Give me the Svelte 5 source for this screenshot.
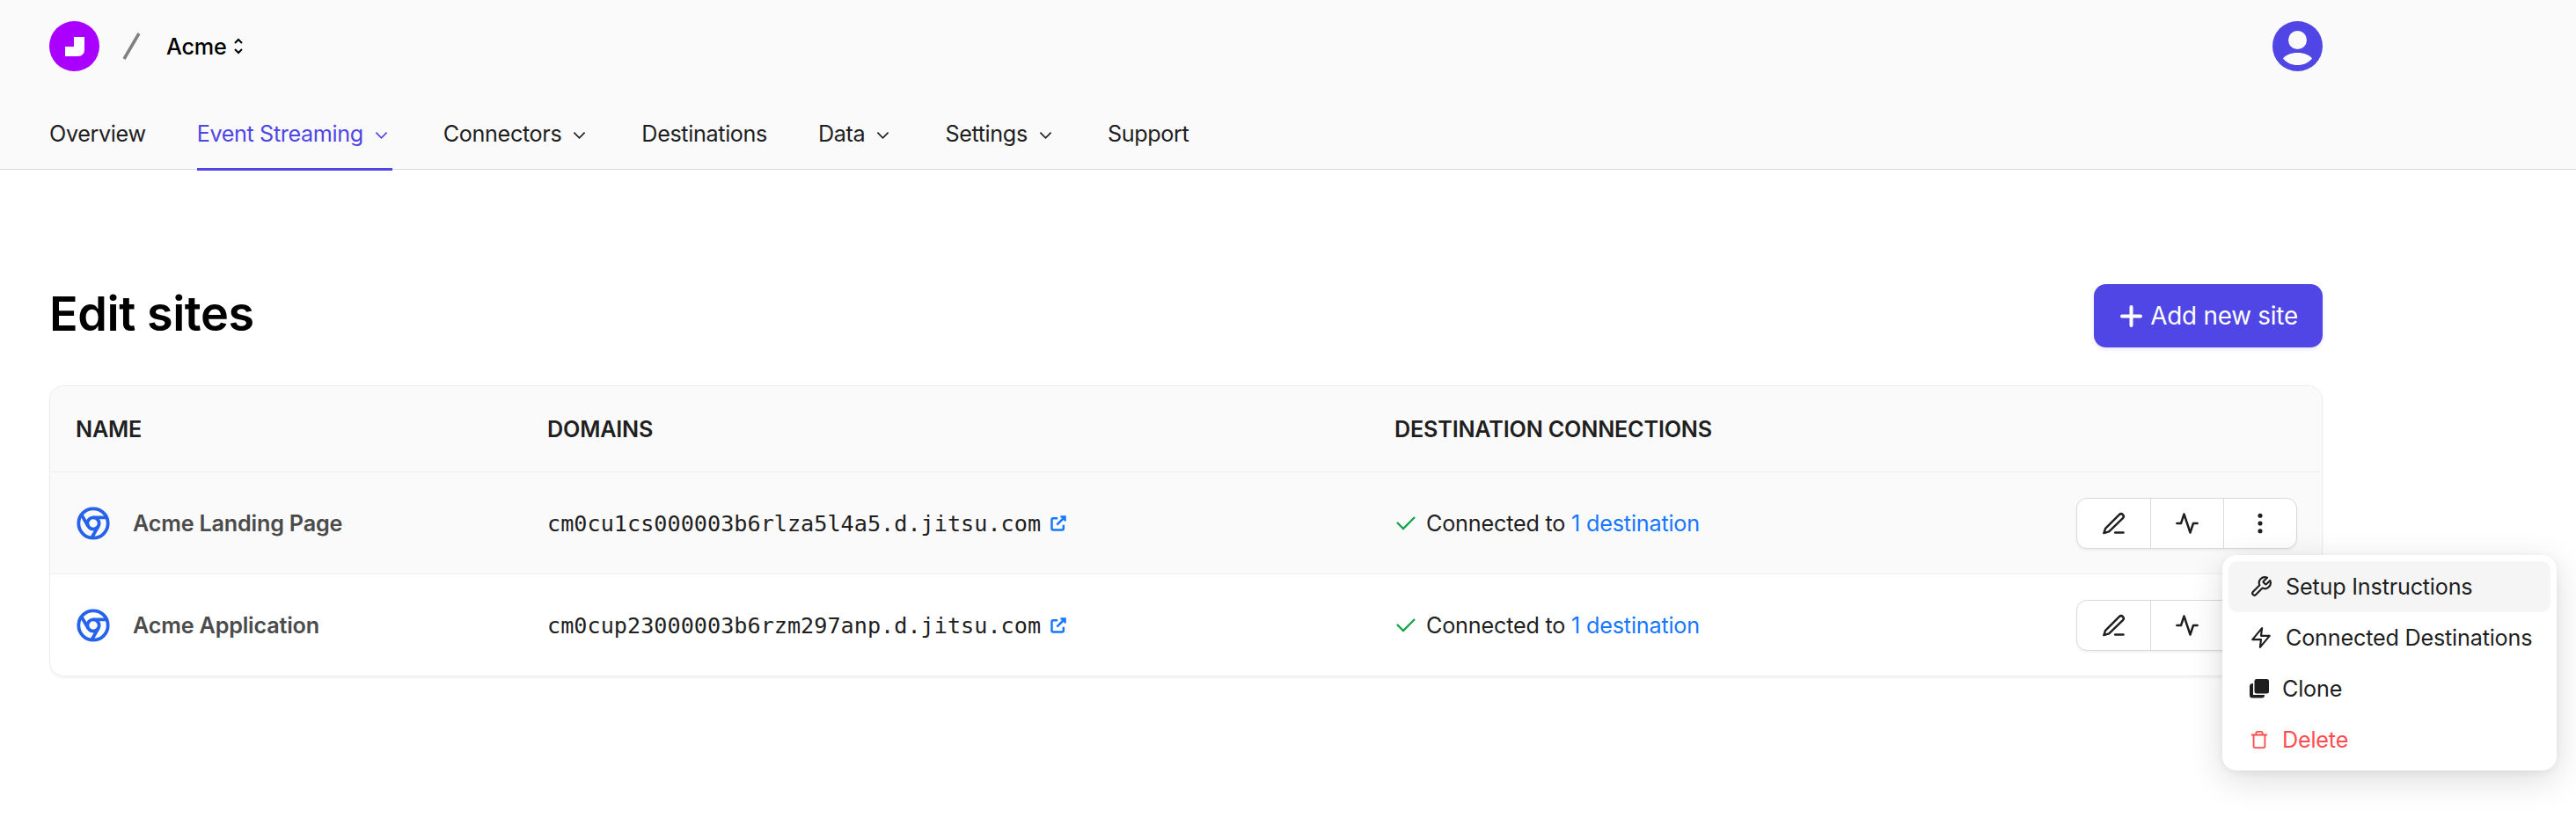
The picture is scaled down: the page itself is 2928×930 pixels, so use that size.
<script lang="ts">
	const tabs = [
		{ label: 'Overview' },
		{ label: 'Event Streaming', caret: true, active: true },
		{ label: 'Connectors', caret: true },
		{ label: 'Destinations' },
		{ label: 'Data', caret: true },
		{ label: 'Settings', caret: true },
		{ label: 'Support' }
	];

	const sites = [
		{ name: 'Acme Landing Page', domain: 'cm0cu1cs000003b6rlza5l4a5.d.jitsu.com' },
		{ name: 'Acme Application', domain: 'cm0cup23000003b6rzm297anp.d.jitsu.com' }
	];
</script>

<div class="page">
	<header class="top">
		<div class="brand">
			<svg class="logo" viewBox="0 0 57 57">
				<circle cx="28.500" cy="28.500" r="28.500" fill="#aa00ff" />
				<path d="M28 18h12v15a7 7 0 0 1-7 7H18V29h10z" fill="#fff" />
			</svg>
			<svg class="slash" viewBox="0 0 21 31">
				<line x1="2" y1="30" x2="19" y2="1" stroke="#808080" stroke-width="3.500" />
			</svg>
			<span class="workspace">Acme</span>
			<svg class="updown" viewBox="0 0 12 19" fill="none" stroke="#000" stroke-width="2">
				<path d="M2 6l4-4 4 4M2 13l4 4 4-4" />
			</svg>
			<svg class="avatar" viewBox="0 0 57 57">
				<circle cx="28.500" cy="28.500" r="28.500" fill="#4f46e5" />
				<circle cx="28.500" cy="21.500" r="10.500" fill="#fafafa" />
				<path d="M12 42.500c3-4 9-6.500 16.500-6.500s13.500 2.500 16.500 6.500c-4 5-10 7.500-16.500 7.500s-12.500-2.500-16.500-7.500z" fill="#fafafa" />
			</svg>
		</div>
		<nav class="tabs">
			{#each tabs as tab}
				<div class="tab" class:active={tab.active}>
					<span>{tab.label}</span>
					{#if tab.caret}
						<svg class="caret" viewBox="0 0 16 10" fill="none" stroke="currentColor" stroke-width="1.800">
							<path d="M1.500 1.500 8 8l6.500-6.500" />
						</svg>
					{/if}
				</div>
			{/each}
		</nav>
	</header>

	<main class="content">
		<div class="title-row">
			<h1>Edit sites</h1>
			<button class="add">
				<svg viewBox="0 0 25 25" fill="none" stroke="#fff" stroke-width="4" stroke-linecap="round">
					<path d="M12.500 2v21M2 12.500h21" />
				</svg>
				Add new site
			</button>
		</div>

		<div class="table-wrap">
			<table>
				<colgroup>
					<col style="width: 536px" />
					<col style="width: 963px" />
					<col />
					<col style="width: 280px" />
				</colgroup>
				<thead>
					<tr>
						<th>Name</th>
						<th>Domains</th>
						<th>Destination Connections</th>
						<th></th>
					</tr>
				</thead>
				<tbody>
					{#each sites as site}
						<tr>
							<td>
								<div class="site">
									<svg class="chrome" viewBox="0 0 24 24" fill="none" stroke="#2563eb" stroke-width="2.300">
										<circle cx="12" cy="12" r="10" />
										<circle cx="12" cy="12" r="4" />
										<path d="M21.170 8H12M3.950 6.060 8.540 14M10.880 21.940 15.460 14" />
									</svg>
									<span>{site.name}</span>
								</div>
							</td>
							<td>
								<div class="domain">
									<span>{site.domain}</span>
									<svg viewBox="0 0 24 24" fill="none" stroke="#1677ff" stroke-width="3">
										<path d="M19 14v5a2 2 0 0 1-2 2H5a2 2 0 0 1-2-2V7a2 2 0 0 1 2-2h6M15 3h6v6M10 14 21 3" />
									</svg>
								</div>
							</td>
							<td>
								<div class="status">
									<svg viewBox="0 0 24 24" fill="none" stroke="#16a34a" stroke-width="2.400">
										<path d="M22 5 9 18l-7-7" />
									</svg>
									<span>Connected to <span class="link">1 destination</span></span>
								</div>
							</td>
							<td>
								<div class="actions">
									<button aria-label="Edit">
										<svg viewBox="0 0 24 24" fill="none" stroke="#1f1f1f" stroke-width="2.100" stroke-linecap="round" stroke-linejoin="round">
											<path d="M13 21h8" />
											<path d="M17 3.500a2.120 2.120 0 0 1 3.500 3.500L7 20l-5 1.500L3.500 17z" />
										</svg>
									</button>
									<button aria-label="Activity">
										<svg viewBox="0 0 24 24" fill="none" stroke="#1f1f1f" stroke-width="2.100" stroke-linecap="round" stroke-linejoin="round">
											<path d="M22 12h-4l-3 9-6-18-3 9H2" />
										</svg>
									</button>
									<button aria-label="More">
										<svg viewBox="0 0 24 24" fill="#1f1f1f">
											<circle cx="12" cy="4.500" r="2.200" />
											<circle cx="12" cy="12" r="2.200" />
											<circle cx="12" cy="19.500" r="2.200" />
										</svg>
									</button>
								</div>
							</td>
						</tr>
					{/each}
				</tbody>
			</table>
		</div>
	</main>

	<div class="menu">
		<div class="item hover">
			<svg viewBox="0 0 24 24" fill="none" stroke="#1f1f1f" stroke-width="2" stroke-linecap="round" stroke-linejoin="round">
				<path d="M14.700 6.300a1 1 0 0 0 0 1.400l1.600 1.600a1 1 0 0 0 1.400 0l3.770-3.770a6 6 0 0 1-7.940 7.940l-6.910 6.910a2.120 2.120 0 0 1-3-3l6.910-6.910a6 6 0 0 1 7.940-7.940l-3.760 3.760z" />
			</svg>
			Setup Instructions
		</div>
		<div class="item">
			<svg viewBox="0 0 24 24" fill="none" stroke="#1f1f1f" stroke-width="2" stroke-linecap="round" stroke-linejoin="round">
				<path d="M13 2 3 14h9l-1 8 10-12h-9z" />
			</svg>
			Connected Destinations
		</div>
		<div class="item small">
			<svg viewBox="0 0 22 22" fill="#1f1f1f">
				<rect x="5.500" y="0" width="16.500" height="16.500" rx="2.500" />
				<path d="M3.500 5H4v13h13v.500a3 3 0 0 1-3 3H3a3 3 0 0 1-3-3V8.500a3.500 3.500 0 0 1 3.500-3.500z" />
			</svg>
			Clone
		</div>
		<div class="item small danger">
			<svg viewBox="0 0 24 24" fill="none" stroke="#ff4d4f" stroke-width="2" stroke-linecap="round" stroke-linejoin="round">
				<path d="M3 6h18M19 6v14c0 1-1 2-2 2H7c-1 0-2-1-2-2V6M8 6V4c0-1 1-2 2-2h4c1 0 2 1 2 2v2" />
			</svg>
			Delete
		</div>
	</div>
</div>

<style>
	:global(body) {
		background: #fff;
	}

	.page {
		position: relative;
		height: 930px;
		overflow: hidden;
		font-family: Inter, 'Liberation Sans', sans-serif;
		font-size: 25.2px;
		letter-spacing: -0.2px;
		color: #1f1f1f;
	}

	.top {
		box-sizing: border-box;
		height: 193px;
		padding: 24px 56px 0;
		background: #fafafa;
		border-bottom: 1px solid #d9d9d9;
	}

	.brand {
		display: flex;
		align-items: center;
		width: 2584px;
		height: 57px;
	}

	.logo {
		width: 57px;
		height: 57px;
	}

	.slash {
		width: 21px;
		height: 31px;
		margin-left: 26px;
	}

	.workspace {
		margin-left: 29px;
		font-weight: 500;
		color: #000;
	}

	.updown {
		width: 12px;
		height: 19px;
		margin-left: 7px;
	}

	.avatar {
		width: 57px;
		height: 57px;
		margin-left: auto;
	}

	.tabs {
		display: flex;
		gap: 58px;
		margin-top: 28px;
		letter-spacing: -0.37px;
	}

	.tab {
		box-sizing: border-box;
		display: flex;
		align-items: center;
		gap: 13px;
		height: 85px;
		padding-top: 4px;
		border-bottom: 3px solid transparent;
	}

	.tab.active {
		color: #4f46e5;
		border-bottom-color: #4f46e5;
	}

	.caret {
		width: 15px;
		height: 10px;
		margin-right: 5px;
		margin-top: 3px;
	}

	.content {
		box-sizing: border-box;
		width: 2696px;
		padding: 130px 56px 0;
	}

	.title-row {
		display: flex;
		justify-content: space-between;
		align-items: center;
		height: 72px;
	}

	h1 {
		margin: 0 0 5px;
		font-size: 54px;
		font-weight: 600;
		letter-spacing: -0.45px;
		color: #000;
	}

	.add {
		display: flex;
		align-items: center;
		gap: 9px;
		box-sizing: border-box;
		height: 72px;
		padding: 0 28px 0 30px;
		border: 0;
		border-radius: 14px;
		background: #4f46e5;
		color: #fff;
		font: inherit;
		font-size: 27.8px;
		letter-spacing: -0.2px;
		box-shadow: 0 2px 4px rgba(79, 70, 229, 0.15);
	}

	.add svg {
		width: 25px;
		height: 25px;
	}

	.table-wrap {
		margin-top: 43px;
		border: 1px solid #ececec;
		border-radius: 16px;
		overflow: hidden;
		box-shadow: 0 2px 3px rgba(0, 0, 0, 0.05);
	}

	table {
		width: 100%;
		border-collapse: collapse;
		table-layout: fixed;
	}

	thead tr {
		height: 97px;
		background: #fafafa;
	}

	th {
		padding: 2px 29px 0;
		text-align: left;
		font-size: 25.2px;
		font-weight: 600;
		text-transform: uppercase;
	}

	tbody tr {
		height: 116px;
		border-top: 1px solid #efefef;
	}

	tbody tr:first-child {
		background: #fafafa;
	}

	td {
		padding: 2px 29px 0;
	}

	.site {
		display: flex;
		align-items: center;
		gap: 25px;
		font-weight: 600;
		color: #4b4b4b;
	}

	.chrome {
		width: 40px;
		height: 40px;
	}

	.domain {
		display: flex;
		align-items: center;
		gap: 10px;
		font-family: 'DejaVu Sans Mono', monospace;
		letter-spacing: 0;
	}

	.domain svg {
		width: 20px;
		height: 20px;
	}

	.status {
		display: flex;
		align-items: center;
		gap: 11px;
		margin-left: 1px;
	}

	.status svg {
		width: 24px;
		height: 24px;
	}

	.link {
		color: #1677ff;
	}

	.actions {
		display: flex;
		float: right;
		height: 58px;
		box-sizing: border-box;
		margin-right: -1px;
		border: 1px solid #d9d9d9;
		border-radius: 12px;
		background: #fff;
		box-shadow: 0 2px 3px rgba(0, 0, 0, 0.05);
	}

	.actions button {
		display: flex;
		align-items: center;
		justify-content: center;
		width: 83px;
		padding: 0;
		border: 0;
		border-left: 1px solid #d9d9d9;
		background: none;
	}

	.actions button:first-child {
		border-left: 0;
	}

	.actions svg {
		width: 28px;
		height: 28px;
	}

	.menu {
		position: absolute;
		left: 2526px;
		top: 631px;
		box-sizing: border-box;
		width: 380px;
		height: 245px;
		padding: 7px;
		background: #fff;
		border-radius: 16px;
		box-shadow: 0 10px 40px rgba(0, 0, 0, 0.14), 0 2px 8px rgba(0, 0, 0, 0.06);
	}

	.item {
		display: flex;
		align-items: center;
		gap: 15px;
		height: 58px;
		padding-left: 24px;
		border-radius: 10px;
		white-space: nowrap;
	}

	.item svg {
		width: 26px;
		height: 26px;
	}

	.item.hover {
		background: #f5f5f5;
	}

	.item.small svg {
		width: 22px;
		height: 22px;
	}

	.item.danger {
		color: #ff4d4f;
	}
</style>
